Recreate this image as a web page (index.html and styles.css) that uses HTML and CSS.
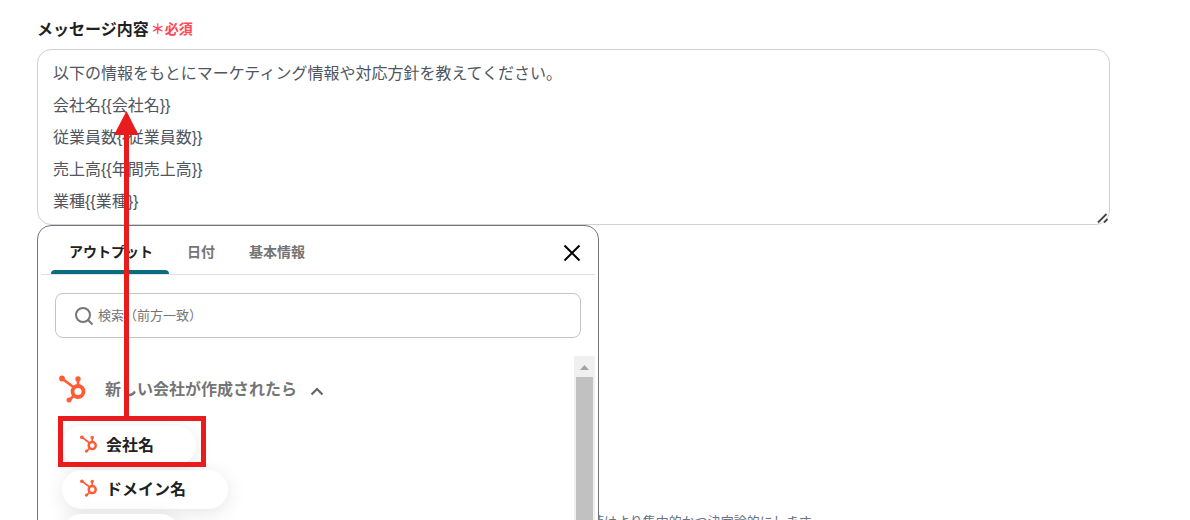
FILE: index.html
```html
<!DOCTYPE html>
<html lang="ja">
<head>
    <meta charset="UTF-8">
    <meta name="viewport" content="width=device-width, initial-scale=1.0">
    <title>メッセージ内容</title>
    <link rel="stylesheet" href="styles.css">
</head>
<body>

    <!-- Logo shared by the heading and the chips -->
    <svg class="symbols" aria-hidden="true">
        <symbol id="logo" viewBox="0 0 28 28">
            <g fill="none" stroke="#ff5c35">
                <circle cx="19" cy="16.500" r="5.500" stroke-width="3.800"/>
                <path d="M3 3.500L15 12.500M19 4.500V11M15 20.500L10.500 25" stroke-width="2.600"/>
            </g>
            <g fill="#ff5c35">
                <circle cx="3" cy="3.500" r="2.900"/>
                <circle cx="19" cy="4" r="2.700"/>
                <circle cx="10" cy="25" r="2.500"/>
            </g>
        </symbol>
    </svg>

    <main class="page">
        <div class="label-row">
            <label for="message">メッセージ内容</label>
            <span class="required">＊必須</span>
        </div>

        <div class="message-box">
            <textarea id="message" class="message" rows="5">以下の情報をもとにマーケティング情報や対応方針を教えてください。
会社名{{会社名}}
従業員数{{従業員数}}
売上高{{年間売上高}}
業種{{業種}}</textarea>
            <svg class="resize-grip" viewBox="0 0 12 12" aria-hidden="true">
                <path d="M1 10.500L9.500 2M7 10.500L10.500 7" stroke="#444" stroke-width="1.800" fill="none"/>
            </svg>

            <!-- Output picker -->
            <section class="picker">
                <div class="tabs">
                    <button type="button" class="tab active">アウトプット</button>
                    <button type="button" class="tab">日付</button>
                    <button type="button" class="tab">基本情報</button>
                    <button type="button" class="close" aria-label="閉じる">
                        <svg viewBox="0 0 18 18"><path d="M1.500 1.500L16.500 16.500M16.500 1.500L1.500 16.500" stroke="#000" stroke-width="2" fill="none"/></svg>
                    </button>
                </div>

                <label class="search">
                    <svg viewBox="0 0 20 20" aria-hidden="true">
                        <circle cx="9" cy="9" r="7" stroke="#757575" stroke-width="2" fill="none"/>
                        <path d="M14 14L18.500 18.500" stroke="#757575" stroke-width="2"/>
                    </svg>
                    <input type="text" placeholder="検索（前方一致）" aria-label="検索">
                </label>

                <div class="results">
                    <div class="group">
                        <button type="button" class="group-title">
                            <svg class="logo-large"><use href="#logo"/></svg>
                            <span>新しい会社が作成されたら</span>
                            <svg class="caret" viewBox="0 0 14 10"><path d="M1.500 8.500L7 3L12.500 8.500" stroke="#666" stroke-width="2.200" fill="none"/></svg>
                        </button>
                        <div class="chips">
                            <button type="button" class="chip"><svg><use href="#logo"/></svg>会社名</button>
                            <button type="button" class="chip"><svg><use href="#logo"/></svg>ドメイン名</button>
                            <button type="button" class="chip"><svg><use href="#logo"/></svg>業種</button>
                        </div>
                    </div>
                    <div class="scrollbar">
                        <div class="scroll-up"></div>
                        <div class="scroll-thumb"></div>
                    </div>
                </div>
            </section>
        </div>

        <p class="hint">値はより集中的かつ決定論的にします</p>
    </main>

    <!-- Callout from the chip to the inserted value -->
    <svg class="callout" aria-hidden="true">
        <rect x="60.500" y="418.500" width="143" height="46" fill="none" stroke="#e81c1c" stroke-width="5"/>
        <path d="M124 134H129V418H124Z" fill="#e81c1c"/>
        <path d="M126.500 111L138.500 135H114Z" fill="#e81c1c"/>
    </svg>

</body>
</html>
```
FILE: styles.css
```css
* {
    box-sizing: border-box;
}

body {
    margin: 0;
    height: 100vh;
    overflow: hidden;
    position: relative;
    background: #fff;
    color: #212121;
    font-family: "Liberation Sans", "Noto Sans CJK JP", sans-serif;
    font-size: 16px;
}

button, input, textarea {
    font-family: inherit;
}

button {
    border: none;
    background: none;
    padding: 0;
    cursor: pointer;
}

.symbols {
    display: none;
}

.page {
    padding: 16px 80px 0 37px;
}

/* Field label */
.label-row {
    display: flex;
    align-items: center;
    gap: 2px;
    height: 24px;
    margin-bottom: 9px;
    font-weight: bold;
}

.required {
    color: #ff4757;
    font-size: 14px;
}

/* Message text */
.message-box {
    position: relative;
}

.message {
    display: block;
    width: 100%;
    padding: 8px 15px 6px;
    border: 1px solid #ced0da;
    border-radius: 14px;
    outline: none;
    resize: none;
    overflow: hidden;
    color: #50555e;
    font-size: 16px;
    line-height: 32px;
}

.resize-grip {
    position: absolute;
    right: 1px;
    bottom: 1px;
    width: 12px;
    height: 12px;
}

/* Picker */
.picker {
    position: absolute;
    top: 100%;
    left: 0;
    width: 562px;
    height: 400px;
    padding: 0 3px;
    border: 1px solid #757575;
    border-radius: 14px;
    background: #fff;
}

.tabs {
    display: flex;
    height: 49px;
    padding: 0 14px 0 10px;
    border-bottom: 1px solid #e0e0e0;
}

.tab {
    height: 48px;
    padding: 6px 16px 0 18px;
    border-bottom: 4px solid transparent;
    color: #757575;
    font-size: 14px;
    font-weight: bold;
}

.tab.active {
    position: relative;
    color: #212121;
}

.tab.active::after {
    content: "";
    position: absolute;
    left: 0;
    right: 0;
    bottom: -4px;
    height: 4px;
    border-radius: 4px 4px 0 0;
    background: #0b6b80;
}

.close {
    margin-left: auto;
    padding-top: 6px;
}

.close svg {
    display: block;
    width: 18px;
    height: 18px;
}

.search {
    display: flex;
    align-items: center;
    gap: 4px;
    height: 45px;
    margin: 18px 14px;
    padding: 0 18px;
    border: 1px solid #c4c4c4;
    border-radius: 8px;
}

.search svg {
    width: 20px;
    height: 20px;
}

.search input {
    flex: 1;
    padding: 0;
    border: none;
    outline: none;
    font-size: 13px;
}

.search input::placeholder {
    color: #757575;
}

/* Results */
.results {
    display: flex;
    height: 240px;
    overflow: hidden;
}

.group {
    flex: 1;
    padding: 18px 18px 0;
}

.group-title {
    display: flex;
    align-items: center;
    height: 30px;
    color: #757575;
    font-size: 16px;
    font-weight: bold;
}

.group-title span {
    padding-bottom: 2px;
}

.logo-large {
    width: 28px;
    height: 28px;
    margin-right: 18px;
}

.caret {
    width: 14px;
    height: 10px;
    margin-left: 13px;
    margin-top: 4px;
}

.chips {
    display: flex;
    flex-direction: column;
    align-items: flex-start;
    gap: 5px;
    padding: 22px 3px 0;
}

.chip {
    display: flex;
    align-items: center;
    gap: 8px;
    height: 39px;
    padding: 0 42px 3px 18px;
    border-radius: 20px;
    background: #fff;
    box-shadow: 0 4px 20px rgba(0, 0, 0, 0.1);
    color: #212121;
    font-size: 16px;
    font-weight: bold;
}

.chip svg {
    width: 18px;
    height: 18px;
}

.scrollbar {
    display: flex;
    flex-direction: column;
    width: 21px;
    padding: 0 2px;
    background: #f0f0f0;
}

.scroll-up {
    height: 5px;
    margin: 9px 4px 7px;
    background: #a3a3a3;
    clip-path: polygon(50% 0, 100% 100%, 0 100%);
}

.scroll-thumb {
    flex: 1;
    background: #c1c1c1;
}

/* Help text under the field */
.hint {
    margin: 287px 0 0 554px;
    color: #6b7280;
    font-size: 13px;
    line-height: 20px;
    white-space: nowrap;
}

/* Red frame and arrow */
.callout {
    position: absolute;
    top: 0;
    left: 0;
    width: 100%;
    height: 100%;
    pointer-events: none;
}
```
